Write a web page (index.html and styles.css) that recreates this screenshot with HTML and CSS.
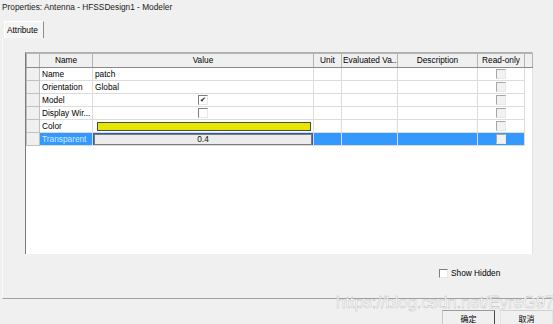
FILE: index.html
```html
<!DOCTYPE html>
<html>
    <head>
        <meta charset="utf-8">
        <title>Properties: Antenna - HFSSDesign1 - Modeler</title>
        <link rel="stylesheet" href="styles.css">
    </head>
    <body>
        <div class="dialog">
            <div class="title">Properties: Antenna - HFSSDesign1 - Modeler</div>

            <div class="tabs">
                <span class="tab">Attribute</span>
            </div>

            <div class="panel">
                <div class="grid">
                    <table>
                        <colgroup>
                            <col style="width:13px">
                            <col style="width:53px">
                            <col style="width:221px">
                            <col style="width:28px">
                            <col style="width:56px">
                            <col style="width:80px">
                            <col style="width:47px">
                            <col style="width:8px">
                        </colgroup>
                        <tr class="head">
                            <th></th>
                            <th>Name</th>
                            <th>Value</th>
                            <th>Unit</th>
                            <th>Evaluated Va...</th>
                            <th>Description</th>
                            <th>Read-only</th>
                            <th></th>
                        </tr>
                        <tr>
                            <td class="rowhead"></td>
                            <td>Name</td>
                            <td>patch</td>
                            <td></td><td></td><td></td>
                            <td class="center"><span class="check ro"></span></td>
                        </tr>
                        <tr>
                            <td class="rowhead"></td>
                            <td>Orientation</td>
                            <td>Global</td>
                            <td></td><td></td><td></td>
                            <td class="center"><span class="check ro"></span></td>
                        </tr>
                        <tr>
                            <td class="rowhead"></td>
                            <td>Model</td>
                            <td class="center"><span class="check on">&#10004;</span></td>
                            <td></td><td></td><td></td>
                            <td class="center"><span class="check ro"></span></td>
                        </tr>
                        <tr>
                            <td class="rowhead"></td>
                            <td>Display Wir...</td>
                            <td class="center"><span class="check"></span></td>
                            <td></td><td></td><td></td>
                            <td class="center"><span class="check ro"></span></td>
                        </tr>
                        <tr>
                            <td class="rowhead"></td>
                            <td>Color</td>
                            <td><div class="swatch"></div></td>
                            <td></td><td></td><td></td>
                            <td class="center"><span class="check ro"></span></td>
                        </tr>
                        <tr class="selected">
                            <td class="rowhead"></td>
                            <td>Transparent</td>
                            <td><div class="editor">0.4</div></td>
                            <td></td><td></td><td></td>
                            <td class="center"><span class="check ro"></span></td>
                        </tr>
                    </table>
                </div><!-- end grid -->

                <div class="options">
                    <span class="check"></span>
                    <span>Show Hidden</span>
                </div>
            </div><!-- end panel -->

            <div class="buttons">
                <button class="btn ok">确定</button>
                <button class="btn">取消</button>
            </div>

            <div class="watermark">https://blog.csdn.net/EyreG97</div>
        </div>
    </body>
</html>
```

FILE: styles.css
```css
*{
    box-sizing: border-box;
}

body{
    margin: 0;
    background-color: #f0f0f0;
    font-family: "Liberation Sans", "Noto Sans CJK SC", sans-serif;
    font-size: 8.3px;
    color: #000;
}

.dialog{
    position: relative;
    width: 553px;
    height: 324px;
    overflow: hidden;
}

.title{
    height: 21px;
    padding: 2px 0 0 2px;
    line-height: 10px;
    color: #1a1a1a;
}

.tabs{
    display: flex;
    height: 17px;
    padding-left: 4px;
}

.tab{
    width: 40px;
    height: 17px;
    padding: 3px 0 0 2px;
    line-height: 10px;
    background-color: #f5f5f5;
    border-left: 1px solid #fff;
    border-top: 1px solid #fff;
    border-right: 1px solid #8c8c8c;
}

.panel{
    height: 261px;
    margin-left: 2px;
    padding: 14px 0 0 22px;
    border-left: 1px solid #fafafa;
    border-bottom: 1px solid #a0a0a0;
}

.grid{
    width: 508px;
    height: 202px;
    background-color: #fff;
    border-left: 1px solid #7a7a7a;
    border-top: 1px solid #b0b0b0;
    border-right: 1px solid #e2e2e2;
}

table{
    width: 506px;
    table-layout: fixed;
    border-collapse: collapse;
}

th, td{
    height: 13px;
    padding: 0 2px;
    line-height: 11px;
    border: 1px solid #dcdcdc;
    white-space: nowrap;
    overflow: hidden;
    font-weight: 400;
    text-align: left;
}

tr.head th{
    height: 14px;
    text-align: center;
    background-color: #f0f0f0;
    border: 1px solid #b4b4b4;
    border-bottom-color: #8a8a8a;
    padding: 0 1px;
}

td.rowhead{
    background-color: #f0f0f0;
    border-color: #c0c0c0;
}

td.center{
    text-align: center;
}

.check{
    display: inline-block;
    width: 10px;
    height: 10px;
    vertical-align: middle;
    background-color: #fff;
    border: 1px solid #e8e8e8;
    border-left-color: #7e7e7e;
    border-top-color: #7e7e7e;
    font-size: 7px;
    line-height: 8px;
    text-align: center;
    color: #111;
}

.check.ro{
    background-color: #f2f2f2;
    border-left-color: #a6a6a6;
    border-top-color: #a6a6a6;
}

.swatch{
    height: 9px;
    margin: 0 0 0 2px;
    background-color: #e6e600;
    border: 1px solid #4a4a4a;
}

tr.selected td{
    background-color: #3399ff;
    color: #d4e8ff;
}

tr.selected td.rowhead{
    background-color: #f0f0f0;
}

.editor{
    height: 11px;
    margin: 0 -1px;
    line-height: 9px;
    text-align: center;
    color: #111;
    background-color: #ececec;
    border: 1px solid #7a7a7a;
    outline: 1px solid #2060d0;
}

.options{
    display: flex;
    align-items: center;
    gap: 3px;
    margin: 14px 0 0 414px;
    line-height: 10px;
}

.options .check{
    width: 9px;
    height: 9px;
}

.buttons{
    display: flex;
    gap: 5px;
    margin-top: 11px;
    padding-left: 442px;
}

.btn{
    width: 56px;
    height: 14px;
    padding: 2px 0 0;
    font-family: "Noto Sans CJK SC", sans-serif;
    font-size: 8px;
    line-height: 9px;
    text-align: center;
    align-self: flex-start;
    background-color: #f0f0f0;
    border: 1px solid #e4e4e4;
    border-top-color: #d0d0d0;
    border-bottom: none;
}

.btn.ok{
    border: 1px solid #9a9a9a;
    border-right-color: #4a4a4a;
    border-left-color: #c8c8c8;
    border-bottom: none;
}

.watermark{
    position: absolute;
    left: 336px;
    top: 293px;
    font-family: "Liberation Sans", sans-serif;
    font-size: 17px;
    letter-spacing: -0.2px;
    color: rgba(255, 255, 255, 0.9);
    -webkit-text-stroke: 0.4px rgba(150, 150, 150, 0.7);
    white-space: nowrap;
}
```
